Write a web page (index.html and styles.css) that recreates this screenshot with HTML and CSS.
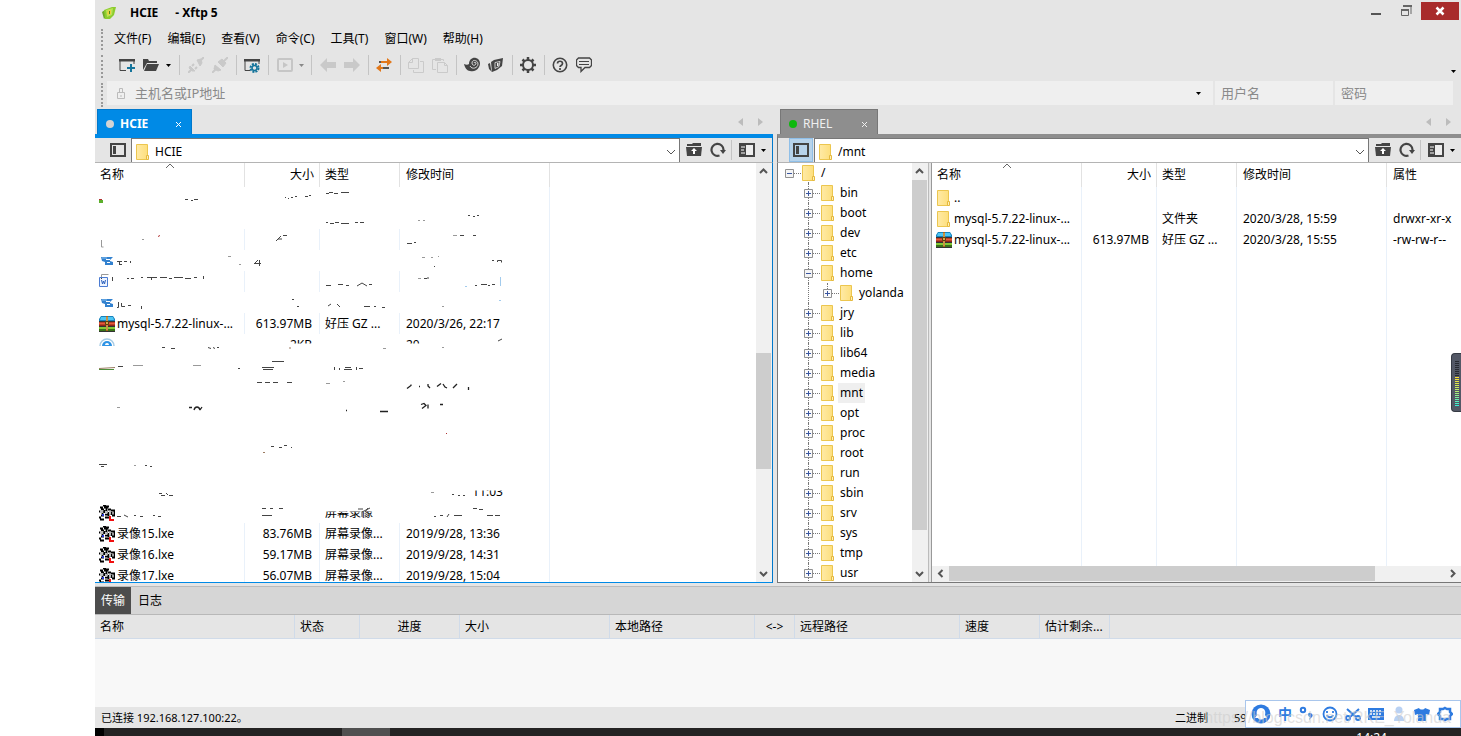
FILE: index.html
```html
<!DOCTYPE html>
<html lang="zh-CN">
<head>
<meta charset="utf-8">
<title>HCIE - Xftp 5</title>
<link rel="stylesheet" href="styles.css">
</head>
<body>
<svg class="defs" aria-hidden="true">
  <defs>
    <linearGradient id="fold" x1="0" y1="0" x2="1" y2="0"><stop offset="0" stop-color="#ffeaa6"/><stop offset="1" stop-color="#fddf7d"/></linearGradient>
    <symbol id="folder" viewBox="0 0 16 16"><path d="M1.500.5h11v15h-11z" fill="url(#fold)" stroke="#ecc64f"/><path d="M11.500 15.500v-4h2v4z" fill="#fff0b8" stroke="#e5b93e"/></symbol>
    <symbol id="plus" viewBox="0 0 9 9"><path d="M.5.5h8v8h-8z" fill="#fafafa" stroke="#919191"/><path d="M2 4.500h5M4.500 2v5" stroke="#3a56a0"/></symbol>
    <symbol id="minus" viewBox="0 0 9 9"><path d="M.5.5h8v8h-8z" fill="#f4f4f4" stroke="#919191"/><path d="M2 4.500h5" stroke="#3a56a0"/></symbol>
    <symbol id="archive" viewBox="0 0 16 16"><path d="M2 0h12l2 3v3H0V3z" fill="#1682bd"/><path d="M2 1h12l1 3H1z" fill="#4cc5f3"/><path d="M0 6h16v4H0z" fill="#8f2418"/><path d="M0 6.500h16v2H0z" fill="#e65a39"/><path d="M0 11h16v4H0z" fill="#397219"/><path d="M0 11h16v2H0z" fill="#83c936"/><path d="M0 5.500h16M0 10.500h16M0 15.500h16" stroke="#333"/><path d="M7 0h2v15H7z" fill="#a76318"/><path d="M8 1v13" stroke="#eac46e"/><path d="M6.500 5.500h3v3h-3z" fill="#d8a648" stroke="#5c3f0f"/></symbol>
    <symbol id="lxe" viewBox="0 0 16 16"><path d="M1 2.500h3M4 .5h3M7 1.500h3M0 6.500h2M2 4.500h3M9 4.500h3M12 5.500h4M15.500 5v5M13 10.500h3M12.500 7v3M0 12.500h2M2 10.500h3M1 14.500h4M6 12.500h4M5.500 5v3M7.500 3v4M9.500 7v4M3.500 6v3M6 9.500h3M5 2.500h4" fill="none" stroke="#000" stroke-width="1.800"/><path d="M1 5h3v3H1zM6 6h2v3H6zM10 6h2v3h-2z" fill="#bbb"/><path d="M3 9h2v2H3z" fill="#2535d5"/><path d="M10 11h2v3h3v2h-5z" fill="#f01010"/></symbol>
    <symbol id="bat" viewBox="0 0 16 16"><path d="M2 4l12 0-3 3 0 1 3 1v3H6V9L3 8z" fill="#3281cf"/><path d="M7 6.500h4M8 9.500h3" stroke="#fff"/><path d="M3 5h5" stroke="#8ac0ef"/></symbol>
    <symbol id="word" viewBox="0 0 16 16"><path d="M2.500 4V.5h7" fill="none" stroke="#999"/><path d="M.5 3.500h8v9h-8z" fill="#eef4ff" stroke="#4a7bd2"/><path d="M2.500 6l1 4 1-3 1 3 1-4" fill="none" stroke="#2d62bd"/></symbol>
    <symbol id="setup" viewBox="0 0 16 16"><path d="M1 9a7 7 0 0 1 14 0" fill="none" stroke="#a5cbe5" stroke-width="1.500"/><path d="M3 9a5 5 0 0 1 10 0z" fill="#2d93e5"/><path d="M6 8a2 2 0 0 1 4 0z" fill="#fff"/></symbol>
    <symbol id="chev-up" viewBox="0 0 15 15"><path d="M4 9l3.500-3.500L11 9" fill="none" stroke="#555" stroke-width="2"/></symbol>
    <symbol id="chev-down" viewBox="0 0 15 15"><path d="M4 6l3.500 3.500L11 6" fill="none" stroke="#555" stroke-width="2"/></symbol>
    <symbol id="chev-left" viewBox="0 0 15 15"><path d="M9.500 4L6 7.500 9.500 11" fill="none" stroke="#555" stroke-width="2"/></symbol>
    <symbol id="chev-right" viewBox="0 0 15 15"><path d="M6 4l3.500 3.500L6 11" fill="none" stroke="#555" stroke-width="2"/></symbol>
    <symbol id="thin-down" viewBox="0 0 10 10"><path d="M1 3l4 4 4-4" fill="none" stroke="#555"/></symbol>
    <symbol id="thin-up" viewBox="0 0 10 6"><path d="M1 5l4-4 4 4" fill="none" stroke="#666"/></symbol>
    <symbol id="caret" viewBox="0 0 5 3"><path d="M0 0h5L2.500 3z" fill="currentColor"/></symbol>
    <symbol id="pane" viewBox="0 0 16 16"><path d="M1 2h14v12H1z" fill="none" stroke="#444" stroke-width="2"/><path d="M3 4h3v8H3z" fill="#444"/></symbol>
    <symbol id="updir" viewBox="0 0 16 16"><path d="M1 4V2h5l1-1h8v3z" fill="#444"/><path d="M0 5h16l-1 9H1z" fill="#444"/><path d="M8 6l3 3H9v3H7V9H5z" fill="#fff"/></symbol>
    <symbol id="reload" viewBox="0 0 16 16"><path d="M9.500 13.500A6 6 0 1 1 13.500 8" fill="none" stroke="#444" stroke-width="2.200"/><path d="M10 8h6l-3 4z" fill="#444"/></symbol>
    <symbol id="view" viewBox="0 0 16 16"><path d="M1 2h14v12H1z" fill="#eee" stroke="#444" stroke-width="2"/><path d="M1 2h6v12H1z" fill="#444"/><path d="M2 5h4M2 8h3M2 11h4" stroke="#fff"/></symbol>
    <symbol id="tri-left" viewBox="0 0 5 8"><path d="M5 0v8L0 4z" fill="#bcbcbc"/></symbol>
    <symbol id="tri-right" viewBox="0 0 5 8"><path d="M0 0v8l5-4z" fill="#bcbcbc"/></symbol>
    <symbol id="cross" viewBox="0 0 7 7"><path d="M1 1l5 5M6 1L1 6" stroke="currentColor"/></symbol>
  </defs>
</svg>

<div class="window">
  <header class="titlebar">
    <svg class="i16" viewBox="0 0 16 16"><path d="M1 7l3-2v8L3 14z" fill="#6da72a"/><path d="M3 5l8-3 4 0-2 8-4 4-5 0z" fill="#8ccc2e"/><path d="M5 5l7-2-1 7-5 2z" fill="#b9e356"/><path d="M8 5l2 0v4l-3 1-1-2z" fill="#f0cf3d"/><path d="M8 6h1v3H8z" fill="#4e8a1c"/></svg>
    <strong class="app-name">HCIE</strong><strong>- Xftp 5</strong>
    <div class="win-buttons">
      <button aria-label="最小化"><svg class="i16" viewBox="0 0 16 16"><path d="M3 11h10" stroke="#555" stroke-width="2"/></svg></button>
      <button aria-label="还原"><svg class="i16" viewBox="0 0 16 16"><path d="M5 3.500h8V11M3.500 7.500h7v5h-7z" fill="none" stroke="#666"/><path d="M5 3h9M3 7h8" stroke="#666" stroke-width="2"/></svg></button>
      <button class="close" aria-label="关闭"><svg class="i16" viewBox="0 0 16 16"><path d="M4.500 4.500l7 7M11.500 4.500l-7 7" stroke="#fff" stroke-width="2.500"/></svg></button>
    </div>
  </header>

  <nav class="menubar grip">
    <button>文件(F)</button><button>编辑(E)</button><button>查看(V)</button><button>命令(C)</button><button>工具(T)</button><button>窗口(W)</button><button>帮助(H)</button>
  </nav>

  <div class="toolbar grip">
    <button aria-label="新建"><svg class="i16" viewBox="0 0 16 16"><path d="M7 13.500H1V3M15 7V2" fill="none" stroke="#444"/><path d="M0 2h16v2.500H0z" fill="#444"/><path d="M12 7v8M8 11h8" stroke="#15749b" stroke-width="2"/></svg></button>
    <button aria-label="打开"><svg class="i16" viewBox="0 0 16 16"><path d="M0 13V2h5l1 2h8v2H4z" fill="#444"/><path d="M4 7h12l-3 7H1z" fill="#444"/></svg></button>
    <button class="drop" aria-label="更多"><svg class="car"><use href="#caret"/></svg></button><i class="sep wide"></i>
    <button aria-label="断开"><svg class="i16" viewBox="0 0 16 16" fill="#c9c9c9" stroke="#c9c9c9"><path d="M2 9l5 5-3 0-3-3zM9 3l4-1 1 4-2 3z"/><path d="M0 16l3-3M4 9l2-2M7 12l2-2M13 3l3-3" stroke-width="2"/></svg></button>
    <button aria-label="重新连接"><svg class="i16" viewBox="0 0 16 16" fill="#c9c9c9" stroke="#c9c9c9"><path d="M3 8l6 5-3 1-4-2zM6 5l4-3 4 4-3 4z"/><path d="M0 16l4-4M12 4l4-4" stroke-width="2"/></svg></button>
    <i class="sep"></i>
    <button aria-label="属性"><svg class="i16" viewBox="0 0 16 16"><path d="M6 13.500H1V3M15 7V2" fill="none" stroke="#444"/><path d="M0 2h16v2.500H0z" fill="#444"/><circle cx="10.500" cy="11" r="4" fill="none" stroke="#15749b" stroke-width="2" stroke-dasharray="2 1.140"/><circle cx="10.500" cy="11" r="2.500" fill="none" stroke="#15749b" stroke-width="1.500"/></svg></button>
    <i class="sep"></i>
    <button class="after" aria-label="运行"><svg class="i16" viewBox="0 0 16 16"><rect x="1" y="2" width="14" height="12" rx="1" fill="none" stroke="#c6c6c6" stroke-width="2"/><path d="M6 5l5 3-5 3z" fill="#c6c6c6"/></svg></button>
    <button class="drop small dim" aria-label="更多"><svg class="car"><use href="#caret"/></svg></button><i class="sep wide"></i>
    <button aria-label="后退"><svg class="i16" viewBox="0 0 16 16"><path d="M0 8l7-7v4h9v6H7v4z" fill="#c9c9c9"/></svg></button>
    <button aria-label="前进"><svg class="i16" viewBox="0 0 16 16"><path d="M16 8L9 1v4H0v6h9v4z" fill="#c9c9c9"/></svg></button>
    <i class="sep"></i>
    <button aria-label="传输"><svg class="i16" viewBox="0 0 16 16"><path d="M3 5h9M4 11h9" stroke="#555" stroke-width="2"/><path d="M5 5h7M4 11h3" stroke="#e27719" stroke-width="2"/><path d="M11 1l5 4-5 4zM5 7l-5 4 5 4z" fill="#e27719"/></svg></button>
    <i class="sep"></i>
    <button aria-label="复制"><svg class="i16" viewBox="0 0 16 16" fill="none" stroke="#cacaca"><path d="M4.500 1.500h6v10h-10v-6zM4.500 1.500v4h-4M12 4.500h3.500v11h-10V13"/></svg></button>
    <button aria-label="粘贴"><svg class="i16" viewBox="0 0 16 16" fill="none" stroke="#cacaca"><path d="M5.500 5.500h7l3 3v7h-10zM12.500 5.500v3h3M4 12.500H.5v-10h11V4"/><path d="M3 2.500h6" stroke-width="3"/></svg></button>
    <i class="sep"></i>
    <button aria-label="Xshell"><svg class="i16" viewBox="0 0 16 16"><path d="M0 7c2 1 4 1 5 0C5 2 9 0 12 1c4 1 5 6 3 9-2 4-6 5-9 4-3 0-5-3-6-7z" fill="#444"/><path d="M6 9c2 4 8 2 8-2 0-4-6-5-6-1 0 3 4 3 4 0 0-1-2-1-2 0" fill="none" stroke="#e5e5e5" stroke-width=".9"/></svg></button>
    <button aria-label="Xftp"><svg class="i16" viewBox="0 0 16 16"><path d="M0 7l2-1 1 6 1 3-3-3z" fill="#444"/><path d="M3 5l3-2 9-2-1 8-5 4-5 2z" fill="#444"/><path d="M7 5.500l5-1-1 5-4 2z" fill="none" stroke="#eee" stroke-width=".8"/><path d="M9 6h1.500v3H9z" fill="#eee"/></svg></button>
    <i class="sep"></i>
    <button aria-label="选项"><svg class="i16" viewBox="0 0 16 16"><circle cx="8" cy="8" r="5" fill="none" stroke="#444" stroke-width="2"/><path d="M8 0v3M8 13v3M0 8h3M13 8h3M2.500 2.500l2 2M11.500 11.500l2 2M2.500 13.500l2-2M11.500 4.500l2-2" stroke="#444" stroke-width="2.500"/></svg></button>
    <i class="sep"></i>
    <button aria-label="帮助"><svg class="i16" viewBox="0 0 16 16" fill="none" stroke="#444"><circle cx="8" cy="8" r="6.700" stroke-width="1.600"/><path d="M5.500 6.500c0-3 5-3 5 0 0 2-2.500 2-2.500 3.500M8 11v2" stroke-width="1.700"/></svg></button>
    <button aria-label="反馈"><svg class="i16" viewBox="0 0 16 16" fill="none" stroke="#444"><path d="M2.500 1h11l2 2v5.500l-2 2H9l-4 4v-4H2.500l-2-2V3z" stroke-width="1.300"/><path d="M3 4.500h10M3 7.500h10" stroke-width="1"/></svg></button>
    <button class="overflow" aria-label="工具栏选项"><svg class="car"><use href="#caret"/></svg></button>
  </div>

  <form class="address grip">
    <label class="field host"><svg class="lock" viewBox="0 0 10 12"><path d="M1.500 5.500h7v6h-7zM3.500 5V1.500h3V5M5 8v2" fill="none" stroke="#bbb"/></svg><input type="text" placeholder="主机名或IP地址" aria-label="主机名或IP地址"><svg class="car"><use href="#caret"/></svg></label>
    <label class="field user"><input type="text" placeholder="用户名" aria-label="用户名"></label>
    <label class="field pass"><input type="password" placeholder="密码" aria-label="密码"></label>
  </form>

  <main class="panes">
    <section class="pane local">
      <div class="tabs">
        <div class="tab"><i class="dot"></i><b>HCIE</b><button aria-label="关闭标签"><svg class="x"><use href="#cross"/></svg></button></div>
        <div class="tab-nav"><svg><use href="#tri-left"/></svg><svg><use href="#tri-right"/></svg></div>
      </div>
      <div class="pathbar">
        <button class="tree-toggle" aria-label="树"><svg class="i16"><use href="#pane"/></svg></button>
        <label class="path"><svg class="i16"><use href="#folder"/></svg><input type="text" value="HCIE" aria-label="本地路径"><svg class="chev"><use href="#thin-down"/></svg></label>
        <button class="tool" aria-label="上一级"><svg class="i16"><use href="#updir"/></svg></button>
        <button class="tool reload" aria-label="刷新"><svg class="i16"><use href="#reload"/></svg></button><i class="sep"></i>
        <button class="tool view" aria-label="查看"><svg class="i16"><use href="#view"/></svg></button>
        <button class="menu" aria-label="查看菜单"><svg class="car"><use href="#caret"/></svg></button>
      </div>
      <div class="content">
        <div class="list">
          <table>
            <colgroup><col class="c-name"><col class="c-size"><col class="c-type"><col class="c-date"><col></colgroup>
            <thead><tr><th>名称<svg class="sort"><use href="#thin-up"/></svg></th><th class="num">大小</th><th>类型</th><th>修改时间</th><th></th></tr></thead>
            <tbody>
              <tr class="bare"><td></td><td></td><td></td><td></td><td></td></tr>
              <tr class="bare"><td></td><td></td><td></td><td></td><td></td></tr>
              <tr><td></td><td></td><td></td><td></td><td></td></tr>
              <tr class="bare"><td><svg class="i16"><use href="#bat"/></svg></td><td></td><td></td><td></td><td></td></tr>
              <tr><td><svg class="i16"><use href="#word"/></svg></td><td></td><td></td><td></td><td></td></tr>
              <tr class="bare"><td><svg class="i16"><use href="#bat"/></svg></td><td></td><td></td><td></td><td></td></tr>
              <tr><td><svg class="i16"><use href="#archive"/></svg>mysql-5.7.22-linux-...</td><td class="num">613.97MB</td><td>好压 GZ ...</td><td>2020/3/26, 22:17</td><td></td></tr>
              <tr class="bare"><td><svg class="i16"><use href="#setup"/></svg></td><td class="num"><span class="top">2KB</span></td><td></td><td><span class="top">20</span></td><td></td></tr>
              <tr class="bare"><td></td><td></td><td></td><td></td><td></td></tr>
              <tr class="bare"><td></td><td></td><td></td><td></td><td></td></tr>
              <tr class="bare"><td></td><td></td><td></td><td></td><td></td></tr>
              <tr class="bare"><td></td><td></td><td></td><td></td><td></td></tr>
              <tr class="bare"><td></td><td></td><td></td><td></td><td></td></tr>
              <tr class="bare"><td></td><td></td><td></td><td></td><td></td></tr>
              <tr class="bare"><td></td><td></td><td></td><td class="late"><span class="low">11:03</span></td><td></td></tr>
              <tr class="bare"><td><svg class="i16"><use href="#lxe"/></svg></td><td></td><td><span class="low">屏幕录像</span></td><td></td><td></td></tr>
              <tr><td><svg class="i16"><use href="#lxe"/></svg>录像15.lxe</td><td class="num">83.76MB</td><td>屏幕录像...</td><td>2019/9/28, 13:36</td><td></td></tr>
              <tr><td><svg class="i16"><use href="#lxe"/></svg>录像16.lxe</td><td class="num">59.17MB</td><td>屏幕录像...</td><td>2019/9/28, 14:31</td><td></td></tr>
              <tr><td><svg class="i16"><use href="#lxe"/></svg>录像17.lxe</td><td class="num">56.07MB</td><td>屏幕录像...</td><td>2019/9/28, 15:04</td><td></td></tr>
            </tbody>
          </table>
          <svg class="remnants" viewBox="95 163 460 418" aria-hidden="true" fill="none" stroke="#444">
            <path stroke="#5caf2c" stroke-width="3" d="M99 201.500h4"/>
            <path stroke="#b03030" d="M99 199.500h3M158 236.500l2-1M446 433.500h1"/>
            <path stroke="#9b7b62" d="M99 368.500l16-1M290 347v2M263 452.500h2"/>
            <path stroke="#4e8f3b" d="M99 369.500h15"/>
            <path stroke="#999" d="M101.500 240v7h2M142 239.500h2M228 256.500h3M239 264.500h2M418 220.500h2M423 220.500h2M453 235.500h4M422 257.500h3M431 257.500h2M438 256.500h1M418 278.500h3M442 306.500h2M133 365.500h10M193 365.500h8M117 407.500h3M134 465.500h2M326 383.500h4M343 381.500h2M431 492.500h3M383 348.500h3M442 347.500h2"/>
            <path d="M185 199.500h3M191 200.500h2M194 199.500h4M285 197.500h1M288 198.500h1M291 197.500h2M295 196.500h2M305 196.500h3M309 195.500h2M326 193.500h3M329 192.500h4M334 193.500h4M341 192.500h8M326 222.500h2M330 223.500h4M335 222.500h4M341 223.500h8M355 222.500h3M360 222.500h4"/>
            <path d="M276 241l5-5M278 239h4M283 235.500h4M407 243.500h5M414 242.500h2M468 215.500h2M473 216.500h2M477 215.500h2M460 235.500h4M473 235.500h3M434 266.500h1"/>
            <path d="M117 261.500h5M119.500 262v3M119 264.500h3M124 261.500h3M130.500 261v2M254 263.500h7M258 260l-3 3M259.500 260v6M492 260.500h2M497.500 262v-1.500h4v2M101 278.500h1"/>
            <path d="M112.500 277v4M127 278.500h2M131 278.500h3M141 277.500h2M147 277.500h10M151.500 278v2M160 277.500h7M169 278.500h3M174 277.500h9M185 278.500h6M194 277.500h3M203.500 276v3M424 278.500h3M428 279v-2M475 285.500h2M481 284.500h6M488 285.500h2M492 284.500h3"/>
            <path stroke="#a2cbed" d="M500.500 277v9M465 286.500h2M499 300.500h2"/>
            <path d="M326 285.500h5M338 284.500h5M346 285.500h3M357 286l5-3 5 3M369 284.500h3M328 306l3-2M337 304l3 3M364 306.500h6M374 306.500h2M382 307.500h3M292 299.500h2M297 306.500h2"/>
            <path d="M117 307.500h1.500V302M121.500 303v3.500h3.500M128 305.500h3M141.500 306v3"/>
            <path d="M162 347.500h3M171 348.500h4M208 347.500l3 1M213 347.500l2 1M217 347.500h2M272 361.500h12M118 366.500h5M262 367.500h12M263 369.500h10M238 368.500h2M334.500 367v3M339.500 368v2M345 367.500h6M344 369.500h8M356.500 367v3M359 368.500h4M257 382.500h5M265 382.500h5M273 382.500h5M287 382.500h5M498 341l4-2"/>
            <path stroke="#222" stroke-width="1.300" d="M407 388.500l4-3v-1M419 386.500h1M428 384v2l2 2M437 386.500l4-3M443 384l2 3 2 1M453 388l4-4M468.500 387v3M189 407.500h3M194 410c1-4 5-4 6 0M202 407l-2 3M346 410.500h1M380 411.500h8M421 404.500l3-1 2 2-4 3M428 408.500v-4M440 404.500h3"/>
            <path d="M271 446.500h3M279 447.500h3M284 445.500h3M291 447.500h1M99 464.500h8M101 466.500h3M145 465.500h2M150 466.500h2M159 493.500h3M161 495.500h4M166 493l2 2M169 495.500h4M452 494.500h2M458 495.500h2M463 495.500h2"/>
            <path d="M117 516.500h4M124 515l4 2M134 515.500h2M140 516.500h3M153 515.500h2M158 516.500h3M262 508.500h4M270 508.500h3M279 508.500h4M262 515.500h10M358 509h5M362 517v-5l8-4M365 512l3-4M434 516.500h2M440 515.500h3M447 517l2-3M454 515.500h8M473 508.500h4M479 509.500h4M487 515.500h6M495 515.500h5"/>
          </svg>
        </div>
        <div class="vscroll"><button aria-label="向上"><svg><use href="#chev-up"/></svg></button><div class="rail"><i class="thumb local-thumb"></i></div><button aria-label="向下"><svg><use href="#chev-down"/></svg></button></div>
      </div>
    </section>

    <section class="pane remote">
      <div class="tabs">
        <div class="tab"><i class="dot"></i><span>RHEL</span><button aria-label="关闭标签"><svg class="x"><use href="#cross"/></svg></button></div>
        <div class="tab-nav"><svg><use href="#tri-left"/></svg><svg><use href="#tri-right"/></svg></div>
      </div>
      <div class="pathbar">
        <button class="tree-toggle on" aria-label="树"><svg class="i16"><use href="#pane"/></svg></button>
        <label class="path"><svg class="i16"><use href="#folder"/></svg><input type="text" value="/mnt" aria-label="远程路径"><svg class="chev"><use href="#thin-down"/></svg></label>
        <button class="tool" aria-label="上一级"><svg class="i16"><use href="#updir"/></svg></button>
        <button class="tool reload" aria-label="刷新"><svg class="i16"><use href="#reload"/></svg></button><i class="sep"></i>
        <button class="tool view" aria-label="查看"><svg class="i16"><use href="#view"/></svg></button>
        <button class="menu" aria-label="查看菜单"><svg class="car"><use href="#caret"/></svg></button>
      </div>
      <div class="content">
        <ul class="tree">
          <li class="root"><svg class="box"><use href="#minus"/></svg><i></i><svg class="i16"><use href="#folder"/></svg><span>/</span></li>
          <li><svg class="box"><use href="#plus"/></svg><i></i><svg class="i16"><use href="#folder"/></svg><span>bin</span></li>
          <li><svg class="box"><use href="#plus"/></svg><i></i><svg class="i16"><use href="#folder"/></svg><span>boot</span></li>
          <li><svg class="box"><use href="#plus"/></svg><i></i><svg class="i16"><use href="#folder"/></svg><span>dev</span></li>
          <li><svg class="box"><use href="#plus"/></svg><i></i><svg class="i16"><use href="#folder"/></svg><span>etc</span></li>
          <li><svg class="box"><use href="#minus"/></svg><i></i><svg class="i16"><use href="#folder"/></svg><span>home</span></li>
          <li class="sub"><svg class="box"><use href="#plus"/></svg><i></i><svg class="i16"><use href="#folder"/></svg><span>yolanda</span></li>
          <li><svg class="box"><use href="#plus"/></svg><i></i><svg class="i16"><use href="#folder"/></svg><span>jry</span></li>
          <li><svg class="box"><use href="#plus"/></svg><i></i><svg class="i16"><use href="#folder"/></svg><span>lib</span></li>
          <li><svg class="box"><use href="#plus"/></svg><i></i><svg class="i16"><use href="#folder"/></svg><span>lib64</span></li>
          <li><svg class="box"><use href="#plus"/></svg><i></i><svg class="i16"><use href="#folder"/></svg><span>media</span></li>
          <li><svg class="box"><use href="#plus"/></svg><i></i><svg class="i16"><use href="#folder"/></svg><span class="sel">mnt</span></li>
          <li><svg class="box"><use href="#plus"/></svg><i></i><svg class="i16"><use href="#folder"/></svg><span>opt</span></li>
          <li><svg class="box"><use href="#plus"/></svg><i></i><svg class="i16"><use href="#folder"/></svg><span>proc</span></li>
          <li><svg class="box"><use href="#plus"/></svg><i></i><svg class="i16"><use href="#folder"/></svg><span>root</span></li>
          <li><svg class="box"><use href="#plus"/></svg><i></i><svg class="i16"><use href="#folder"/></svg><span>run</span></li>
          <li><svg class="box"><use href="#plus"/></svg><i></i><svg class="i16"><use href="#folder"/></svg><span>sbin</span></li>
          <li><svg class="box"><use href="#plus"/></svg><i></i><svg class="i16"><use href="#folder"/></svg><span>srv</span></li>
          <li><svg class="box"><use href="#plus"/></svg><i></i><svg class="i16"><use href="#folder"/></svg><span>sys</span></li>
          <li><svg class="box"><use href="#plus"/></svg><i></i><svg class="i16"><use href="#folder"/></svg><span>tmp</span></li>
          <li><svg class="box"><use href="#plus"/></svg><i></i><svg class="i16"><use href="#folder"/></svg><span>usr</span></li>
        </ul>
        <div class="vscroll tree-scroll"><button aria-label="向上"><svg><use href="#chev-up"/></svg></button><div class="rail"><i class="thumb"></i></div><button aria-label="向下"><svg><use href="#chev-down"/></svg></button></div>
        <i class="splitter"></i>
        <div class="files">
          <div class="list">
            <table>
              <colgroup><col class="c-name"><col class="c-size"><col class="c-type"><col class="c-date"><col></colgroup>
              <thead><tr><th>名称<svg class="sort"><use href="#thin-up"/></svg></th><th class="num">大小</th><th>类型</th><th>修改时间</th><th class="last">属性</th></tr></thead>
              <tbody>
                <tr><td><svg class="i16"><use href="#folder"/></svg>..</td><td></td><td></td><td></td><td class="last"></td></tr>
                <tr><td><svg class="i16"><use href="#folder"/></svg>mysql-5.7.22-linux-...</td><td></td><td>文件夹</td><td>2020/3/28, 15:59</td><td class="last">drwxr-xr-x</td></tr>
                <tr><td><svg class="i16"><use href="#archive"/></svg>mysql-5.7.22-linux-...</td><td class="num">613.97MB</td><td>好压 GZ ...</td><td>2020/3/28, 15:55</td><td class="last">-rw-rw-r--</td></tr>
                <tr class="fill"><td></td><td></td><td></td><td></td><td class="last"></td></tr>
              </tbody>
            </table>
          </div>
          <div class="hscroll"><button aria-label="向左"><svg><use href="#chev-left"/></svg></button><div class="rail"><i class="thumb"></i></div><button aria-label="向右"><svg><use href="#chev-right"/></svg></button></div>
        </div>
      </div>
    </section>
  </main>

  <section class="transfer">
    <div class="dock-tabs"><button class="active">传输</button><button>日志</button></div>
    <table>
      <colgroup><col class="t200"><col class="t65"><col class="t100"><col class="t150"><col class="t145"><col class="t40"><col class="t165"><col class="t80"><col class="t70"><col></colgroup>
      <thead><tr><th>名称</th><th>状态</th><th class="mid">进度</th><th>大小</th><th>本地路径</th><th class="mid">&lt;-&gt;</th><th>远程路径</th><th>速度</th><th>估计剩余...</th><th class="last"></th></tr></thead>
    </table>
  </section>

  <footer class="status"><span>已连接 192.168.127.100:22。</span><span class="mode">二进制</span><span class="count">59</span></footer>
  <div class="taskbar"><i class="app"></i><time>14:24</time></div>
</div>

<aside class="meter" aria-hidden="true"><i class="off"></i><i class="on"></i></aside>

<aside class="ime">
  <svg class="big" viewBox="0 0 20 20"><circle cx="10" cy="10" r="9.500" fill="#2e7be0"/><path d="M10 4c4 0 5 4 4 7l2 3h-3c-1 2-5 2-6 0H4l2-3C5 8 6 4 10 4z" fill="#fff"/></svg>
  <b>中</b>
  <svg viewBox="0 0 16 16"><circle cx="4" cy="4" r="2.200" fill="none" stroke="#2e7be0" stroke-width="2"/><path d="M9 8a2.500 2.500 0 1 1 4 3l-3 3 1-3c-1 0-2-1-2-3z" fill="#2e7be0"/></svg>
  <svg viewBox="0 0 16 16" fill="none" stroke="#2e7be0" stroke-width="1.800"><circle cx="8" cy="8" r="6.500"/><path d="M5 9c1 3 5 3 6 0M5 5v2M11 5v2"/></svg>
  <svg viewBox="0 0 16 16" fill="none" stroke="#2e7be0" stroke-width="2"><path d="M2 3l9 8M14 3l-9 8"/><circle cx="3" cy="12" r="2"/><circle cx="13" cy="12" r="2"/></svg>
  <svg viewBox="0 0 16 16"><path d="M0 2h16v12H0z" fill="#2e7be0"/><path d="M2 5h12M2 8h12" stroke="#fff" stroke-width="1.500" stroke-dasharray="2 1"/><path d="M4 11h8" stroke="#fff" stroke-width="1.500"/></svg>
  <svg viewBox="0 0 16 16" fill="#b9d1f3"><circle cx="8" cy="4" r="3.500"/><path d="M3 15c0-8 10-8 10 0z"/></svg>
  <svg viewBox="0 0 16 16"><path d="M5 2c1 2 5 2 6 0l5 2-1 5-3-1v7H4V8L1 9 0 4z" fill="#2e7be0"/></svg>
  <svg viewBox="0 0 16 16" fill="none" stroke="#2e7be0"><path d="M8 2l2 1 3 0 0 3 2 2-2 2 0 3-3 0-2 1-2-1-3 0 0-3-2-2 2-2 0-3 3 0z" stroke-width="2.500"/></svg>
</aside>
<div class="watermark">https://blog.csdn.net/RKE_Yolanda</div>
</body>
</html>
```

FILE: styles.css
```css
* { box-sizing: border-box; }
body {
  margin: 0;
  background: #fff;
  color: #000;
  font: 12px/20px "Noto Sans", "Noto Sans CJK SC", sans-serif;
  overflow: hidden;
}
svg { display: block; flex: none; }
button {
  font: inherit;
  color: inherit;
  background: none;
  border: 0;
  padding: 0;
  display: flex;
  align-items: center;
  justify-content: center;
  flex: none;
}
input {
  font: inherit;
  color: inherit;
  border: 0;
  background: none;
  padding: 0;
  outline: 0;
  flex: 1;
  min-width: 0;
}
.defs { position: absolute; width: 0; height: 0; }
.i16 { width: 16px; height: 16px; }
.car { width: 5px; height: 3px; }
.window {
  margin-left: 95px;
  height: 100vh;
  display: flex;
  flex-direction: column;
  background: #e5e5e5;
}

.titlebar { display: flex; align-items: center; height: 26px; padding: 0 2px 0 6px; }
.app-name { margin: 0 17px 0 13px; }
.win-buttons { display: flex; margin-left: auto; align-self: flex-start; padding-top: 2px; }
.win-buttons button { width: 30px; height: 18px; }
.win-buttons .close { width: 38px; background: #a82c2c; }

.grip { position: relative; display: flex; align-items: center; }
.grip::before {
  content: "";
  position: absolute;
  left: 6px;
  top: 3px;
  bottom: 2px;
  border-left: 2px dotted #999;
}
.menubar { height: 26px; padding-left: 19px; gap: 16px; }
.toolbar { height: 28px; padding-left: 20px; padding-bottom: 2px; }
.toolbar button { width: 24px; height: 24px; }
.toolbar .drop { width: 10px; }
.toolbar .drop.small { width: 8px; }
.toolbar .dim { color: #888; }
.toolbar .after { margin-left: 1px; }
.toolbar .overflow { width: 12px; margin-left: auto; padding-top: 12px; margin-right: 2px; }
.sep { width: 1px; height: 20px; margin: 0 3px 0 4px; background: #c4c4c4; flex: none; }
.sep.wide { margin-left: 6px; margin-right: 4px; }

.address { height: 29px; padding: 1px 8px 4px 12px; gap: 2px; font-size: 13px; color: #888; }
.field { display: flex; align-items: center; height: 24px; background: #efefef; padding: 0 6px; }
.field input::placeholder { color: #8a8a8a; opacity: 1; }
.host { flex: 1; padding: 0 12px 0 9px; color: #000; }
.lock { width: 10px; height: 12px; margin-right: 9px; }
.user { width: 118px; }
.pass { width: 118px; }

.panes { flex: 1; min-height: 0; display: flex; gap: 4px; }
.pane { flex: 678 1 0; min-width: 0; display: flex; flex-direction: column; }
.remote { flex-grow: 684; }
.tabs { display: flex; height: 25px; padding-left: 2px; }
.tab { display: flex; align-items: center; width: 95px; padding: 4px 9px 0 8px; color: #fff; font-size: 12px; background: #008ae6; border: 1px solid #0078cc; border-bottom: 0; }
.dot { width: 8px; height: 8px; border-radius: 50%; background: #d4d4d4; margin-right: 6px; }
.tab button { margin-left: auto; }
.x { width: 7px; height: 7px; }
.remote .tabs { padding-left: 3px; }
.remote .tab { width: 98px; background: #8e8e8e; border-color: #777; color: #f0f0f0; }
.remote .dot { background: #0db80d; }
.tab-nav { display: flex; gap: 15px; align-items: center; margin-left: auto; padding-right: 10px; }
.tab-nav svg { width: 5px; height: 8px; }

.pathbar { display: flex; align-items: center; height: 29px; border-top: 4px solid #008ae6; border-bottom: 1px solid #b4b4b4; border-right: 1px solid #0078cc; flex: none; }
.remote .pathbar { border-top-color: #8e8e8e; border-left: 1px solid #777; border-right: 0; }
.tree-toggle { width: 24px; height: 24px; margin-left: 11px; }
.tree-toggle.on { background: #b7d3eb; border: 1px solid #8fbfe8; }
.path { flex: 1; min-width: 0; display: flex; align-items: center; height: 24px; margin: 0 6px 0 1px; padding: 3px 3px 0; background: #fff; border: 1px solid #777; border-bottom: 0; }
.path input { margin-left: 4px; }
.chev { width: 10px; height: 10px; }
.tool { width: 16px; margin-right: 8px; }
.tool.reload { margin-right: 5px; }
.tool.view { margin: 0 0 0 7px; }
.pathbar .sep { margin: 0; }
.menu { width: 17px; }

.content { flex: 1; min-height: 0; display: flex; background: #fff; border: 1px solid #777; border-top: 0; border-right: 0; }
.local .content { border: 0; border-right: 1px solid #0078cc; border-bottom: 1px solid #008ae6; }
.list { position: relative; flex: 1; min-width: 0; min-height: 0; overflow: hidden; }
table { border-collapse: separate; border-spacing: 0; table-layout: fixed; width: 100%; }
.c-name { width: 150px; }
.c-size { width: 75px; }
.c-type { width: 80px; }
.c-date { width: 150px; }
th { font-weight: normal; text-align: left; white-space: nowrap; }
.list th { position: relative; height: 24px; padding: 0 5px; border-right: 1px solid #e2e2e2; }
.list td { height: 21px; padding: 0 5px; border-right: 1px solid #e9f1fa; white-space: nowrap; overflow: hidden; }
.list td:first-child { padding-left: 4px; padding-right: 0; }
.list td:first-child svg { display: inline-block; vertical-align: middle; margin-right: 2px; }
.list .num { text-align: right; }
.list td.num { padding-right: 7px; }
.list .bare td:not(:nth-child(4)) { border-right-color: #fff; }
.local .list th:last-child, .local .list td:last-child, .list .last { border-right: 0; }
.list th:nth-child(4), .list td:nth-child(4), .list th.last, .list td.last { padding-left: 6px; padding-right: 0; }
.list .late { text-align: right; }
.late .low { margin-right: 46px; }
.top { clip-path: inset(0 0 55% 0); display: inline-block; }
.low { clip-path: inset(45% 0 0 0); display: inline-block; }
.sort { position: absolute; width: 10px; height: 6px; left: 70px; top: 0; }
.remnants { position: absolute; left: 0; top: 0; width: 460px; height: 418px; }

.vscroll { width: 16px; display: flex; flex-direction: column; background: #f0f0f0; flex: none; }
.vscroll button, .hscroll button { width: 15px; height: 17px; }
.vscroll button svg, .hscroll button svg { width: 15px; height: 15px; }
.rail { flex: 1; min-height: 0; display: flex; }
.thumb { background: #cdcdcd; width: 15px; height: 91%; }
.local-thumb { height: 30%; margin-top: 173px; }
.tree { list-style: none; margin: 0; padding: 0; width: 134px; overflow: hidden; font-size: 12px; flex: none; }
.tree li { position: relative; display: flex; align-items: center; height: 20px; padding-left: 26px; }
.tree li::before { content: ""; position: absolute; left: 30px; top: 0; height: 20px; border-left: 1px dotted #777; }
.tree .root::before { top: 16px; height: 4px; }
.tree .root { padding-left: 7px; }
.tree .sub { padding-left: 45px; }
.tree .sub::after { content: ""; position: absolute; left: 49px; top: 0; height: 6px; border-left: 1px dotted #777; }
.box { position: relative; width: 9px; height: 9px; }
.tree li i { width: 7px; border-top: 1px dotted #777; }
.tree span { padding: 0 2px; line-height: 20px; margin-left: 2px; }
.tree .i16 { position: relative; }
.tree .sel { background: #efefef; }
.splitter { width: 4px; background: #e5e5e5; border-left: 1px solid #bbb; border-right: 1px solid #999; flex: none; }
.files { flex: 1; min-width: 0; display: flex; flex-direction: column; }
.files table { height: 100%; }
.files .fill td { height: auto; }
.hscroll { height: 16px; display: flex; background: #f0f0f0; flex: none; }
.hscroll button { height: 15px; width: 17px; }
.hscroll .thumb { width: 86%; height: 15px; }

.transfer { height: 121px; margin-top: 3px; background: #f8f8f8; border-top: 1px solid #bbb; flex: none; }
.dock-tabs { display: flex; height: 28px; background: #d6d6d6; border-bottom: 1px solid #b8b8b8; }
.dock-tabs button { padding: 0 7px; }
.dock-tabs .active { padding: 0 6px; background: #4d4d4d; color: #fff; }
.transfer th { height: 24px; padding: 0 5px; background: #e5e5e5; border-right: 1px solid #d0dbe9; border-bottom: 1px solid #d0dbe9; }
.transfer .mid { text-align: center; padding: 0; }
.transfer .last { border-right: 0; }
.t200 { width: 200px; } .t65 { width: 65px; } .t100 { width: 100px; } .t150 { width: 150px; } .t145 { width: 145px; }
.t40 { width: 40px; } .t165 { width: 165px; } .t80 { width: 80px; } .t70 { width: 70px; }

.status { display: flex; align-items: center; height: 21px; padding: 0 5px 0 6px; font-size: 11px; flex: none; }
.status .mode { margin-left: auto; margin-right: 26px; }
.status .count { width: 222px; }
.taskbar { position: relative; display: flex; height: 8px; background: #242323; border-left: 9px solid #000; overflow: hidden; flex: none; }
.taskbar .app { width: 48px; margin-left: 238px; background: #505050; }
.taskbar time { margin-left: auto; margin-right: 74px; color: #fff; }

.meter { position: absolute; right: 0; top: 353px; width: 10px; height: 59px; padding: 7px 2px 0 3px; background: #535866; border: 1px solid #363a44; border-right: 0; border-radius: 4px 0 0 4px; }
.meter i { display: block; height: 16px; background: repeating-linear-gradient(#272a31 0 1px, #535866 1px 2px); }
.meter .on { height: 29px; background: repeating-linear-gradient(#53586600 0 1px, #535866 1px 2px), linear-gradient(#ffe02c, #b4f070 50%, #30f0dc); }
.ime { position: absolute; right: 0; bottom: 8px; display: flex; align-items: center; justify-content: space-between; width: 216px; height: 28px; padding: 0 7px 0 5px; background: #fff; border: 1px solid #a9c6ec; color: #2e7be0; }
.ime svg { width: 16px; height: 16px; }
.ime .big { width: 20px; height: 20px; }
.ime b { font-size: 14px; }
.watermark { position: absolute; right: 10px; bottom: 8px; font: 16px/20px "Liberation Sans", Arial, sans-serif; color: rgba(205, 205, 205, 0.6); white-space: nowrap; }
```
